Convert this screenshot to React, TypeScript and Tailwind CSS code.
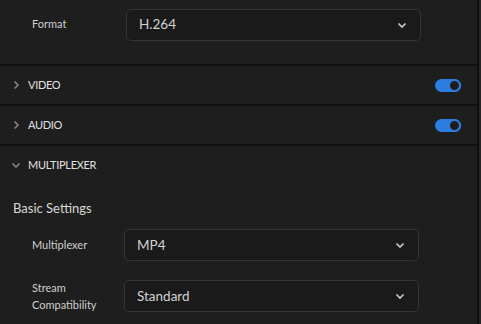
import React from "react";

const Chevron = ({ dir }: { dir: "right" | "down" }) => (
  <svg width="10" height="10" viewBox="0 0 10 10" className="text-[#8a8a8a]">
    {dir === "right" ? (
      <path d="M3.5 1.5 L7 5 L3.5 8.5" fill="none" stroke="currentColor" strokeWidth="1.5" />
    ) : (
      <path d="M1.5 3.5 L5 7 L8.5 3.5" fill="none" stroke="currentColor" strokeWidth="1.5" />
    )}
  </svg>
);

const Toggle = () => (
  <div className="relative w-[26px] h-[13px] rounded-full bg-[#2d7ce0]">
    <div className="absolute right-0 top-0 w-[13px] h-[13px] rounded-full bg-[#1c1c1c] border-[2px] border-[#2d7ce0]" />
  </div>
);

const Select = ({ value }: { value: string }) => (
  <div className="flex items-center justify-between w-[295px] h-[32px] px-3 rounded-[5px] border border-[#353535] bg-[#1a1a1a]">
    <span className="text-[13.5px] text-[#d2d2d2]">{value}</span>
    <svg width="12" height="12" viewBox="0 0 12 12" className="text-[#c8c8c8]">
      <path d="M2.5 4.5 L6 8 L9.5 4.5" fill="none" stroke="currentColor" strokeWidth="1.7" />
    </svg>
  </div>
);

const Section = ({
  title,
  open,
  toggle,
}: {
  title: string;
  open?: boolean;
  toggle?: boolean;
}) => (
  <div className="flex items-center justify-between h-[38px] pl-[11px] pr-[16px]">
    <div className="flex items-center gap-[7px]">
      <Chevron dir={open ? "down" : "right"} />
      <span className="text-[11px] text-[#e0e0e0] tracking-[-0.3px]">{title}</span>
    </div>
    {toggle && <Toggle />}
  </div>
);

const Divider = () => <div className="h-[2px] bg-[#101010]" />;

export default function App() {
  return (
    <div
      className="flex w-[481px] h-[324px] bg-[#1e1e1e] overflow-hidden"
      style={{ fontFamily: "Lato, 'Open Sans', sans-serif" }}
    >
      <div className="flex-1 flex flex-col">
        {/* Format */}
        <div className="flex items-center h-[64px] pl-[32px] pb-[15px]">
          <span className="w-[94px] text-[11px] text-[#cfcfcf]">Format</span>
          <Select value="H.264" />
        </div>
        <Divider />
        <Section title="VIDEO" toggle />
        <Divider />
        <Section title="AUDIO" toggle />
        <Divider />
        <Section title="MULTIPLEXER" open />

        <div className="pl-[13px] pt-[14px] h-[34px] leading-[20px] text-[13px] text-[#d8d8d8]">
          Basic Settings
        </div>

        <div className="flex flex-col gap-[18px] pt-[11px]">
          <div className="flex items-center pl-[32px]">
            <span className="w-[92px] text-[11px] text-[#cfcfcf]">Multiplexer</span>
            <Select value="MP4" />
          </div>
          <div className="flex items-center pl-[32px]">
            <span className="w-[92px] text-[11px] leading-[17px] text-[#cfcfcf]">
              Stream
              <br />
              Compatibility
            </span>
            <Select value="Standard" />
          </div>
        </div>
      </div>
      <div className="w-[2px] bg-[#0f0f0f]" />
      <div className="w-[2px] bg-[#262626]" />
    </div>
  );
}
